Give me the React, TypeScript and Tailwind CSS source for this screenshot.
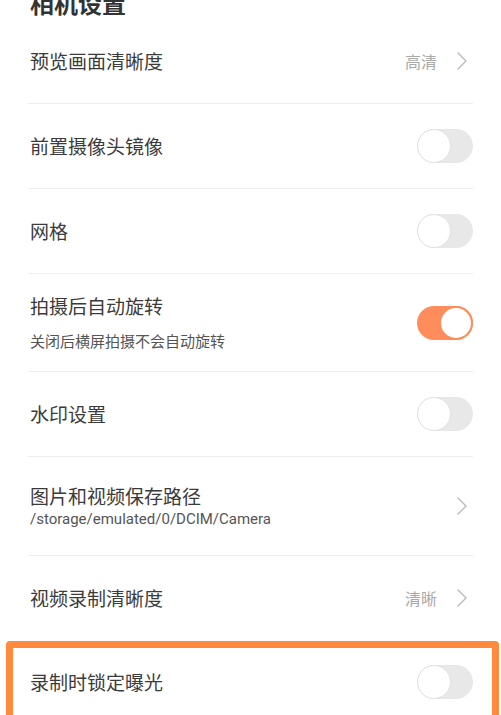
import React from 'react';

const cjk = { fontFamily: '"Noto Sans CJK SC", "Noto Sans", sans-serif' };
const latin = { fontFamily: 'Roboto, "Noto Sans CJK SC", sans-serif' };

function Chevron() {
  return (
    <svg width="10" height="18" viewBox="0 0 10 18" fill="none" className="shrink-0">
      <path d="M1 1 L9 9 L1 17" stroke="#b8b8b8" strokeWidth="1.3" strokeLinecap="round" strokeLinejoin="round" />
    </svg>
  );
}

function Toggle({ on = false }: { on?: boolean }) {
  return (
    <div
      className={
        on
          ? 'w-[56px] h-[34px] rounded-full bg-[#ff8d5c] flex items-center justify-end shrink-0'
          : 'w-[56px] h-[34px] rounded-full bg-[#e8e8e8] flex items-center justify-start shrink-0'
      }
    >
      <div
        className={
          on
            ? 'w-[34px] h-[34px] rounded-full bg-white border-[2px] border-[#ff8d5c]'
            : 'w-[34px] h-[34px] rounded-full bg-white border border-[#e2e2e2]'
        }
      />
    </div>
  );
}

type Row = {
  title: string;
  sub?: string;
  subLatin?: boolean;
  value?: string;
  kind: 'link' | 'toggle';
  on?: boolean;
  h: number;
};

const rows: Row[] = [
  { title: '预览画面清晰度', value: '高清', kind: 'link', h: 84 },
  { title: '前置摄像头镜像', kind: 'toggle', h: 84 },
  { title: '网格', kind: 'toggle', h: 84 },
  { title: '拍摄后自动旋转', sub: '关闭后横屏拍摄不会自动旋转', kind: 'toggle', on: true, h: 97 },
  { title: '水印设置', kind: 'toggle', h: 84 },
  { title: '图片和视频保存路径', sub: '/storage/emulated/0/DCIM/Camera', subLatin: true, kind: 'link', h: 98 },
  { title: '视频录制清晰度', value: '清晰', kind: 'link', h: 84 },
];

function SettingRow({ row, divider }: { row: Row; divider: boolean }) {
  return (
    <div className="mx-[28px]">
      <div className="flex items-center justify-between" style={{ height: row.h }}>
        <div className="pl-[2px] flex flex-col">
          <div className="text-[19px] leading-[26px] text-[#3b3b3b]" style={cjk}>
            {row.title}
          </div>
          {row.sub && (
            <div
              className={
                row.subLatin
                  ? 'text-[15px] leading-[20px] text-[#555]'
                  : 'text-[15px] leading-[22px] mt-[11px] text-[#555]'
              }
              style={row.subLatin ? latin : cjk}
            >
              {row.sub}
            </div>
          )}
        </div>
        {row.kind === 'toggle' ? (
          <Toggle on={row.on} />
        ) : (
          <div className="flex items-center gap-[20px] pr-[6px]">
            {row.value && (
              <span className="text-[16px] text-[#a9a9a9]" style={cjk}>
                {row.value}
              </span>
            )}
            <Chevron />
          </div>
        )}
      </div>
      {divider && <div className="h-px bg-[#eeeeee]" />}
    </div>
  );
}

export default function App() {
  return (
    <div className="w-[501px] h-[715px] bg-white overflow-hidden relative">
      <div className="h-[19px]">
        <div className="pl-[30px] -translate-y-[9px] text-[24px] leading-[24px] font-bold text-[#333]" style={cjk}>
          相机设置
        </div>
      </div>
      {rows.map((r, i) => (
        <SettingRow key={r.title} row={r} divider={i < rows.length - 1} />
      ))}
      <div className="relative">
        <SettingRow row={{ title: '录制时锁定曝光', kind: 'toggle', h: 84 }} divider={false} />
        <div className="absolute left-[6px] right-[2px] top-[1px] h-[90px] border-[7px] border-[#ff8a3d] rounded-[4px] pointer-events-none" />
      </div>
    </div>
  );
}
